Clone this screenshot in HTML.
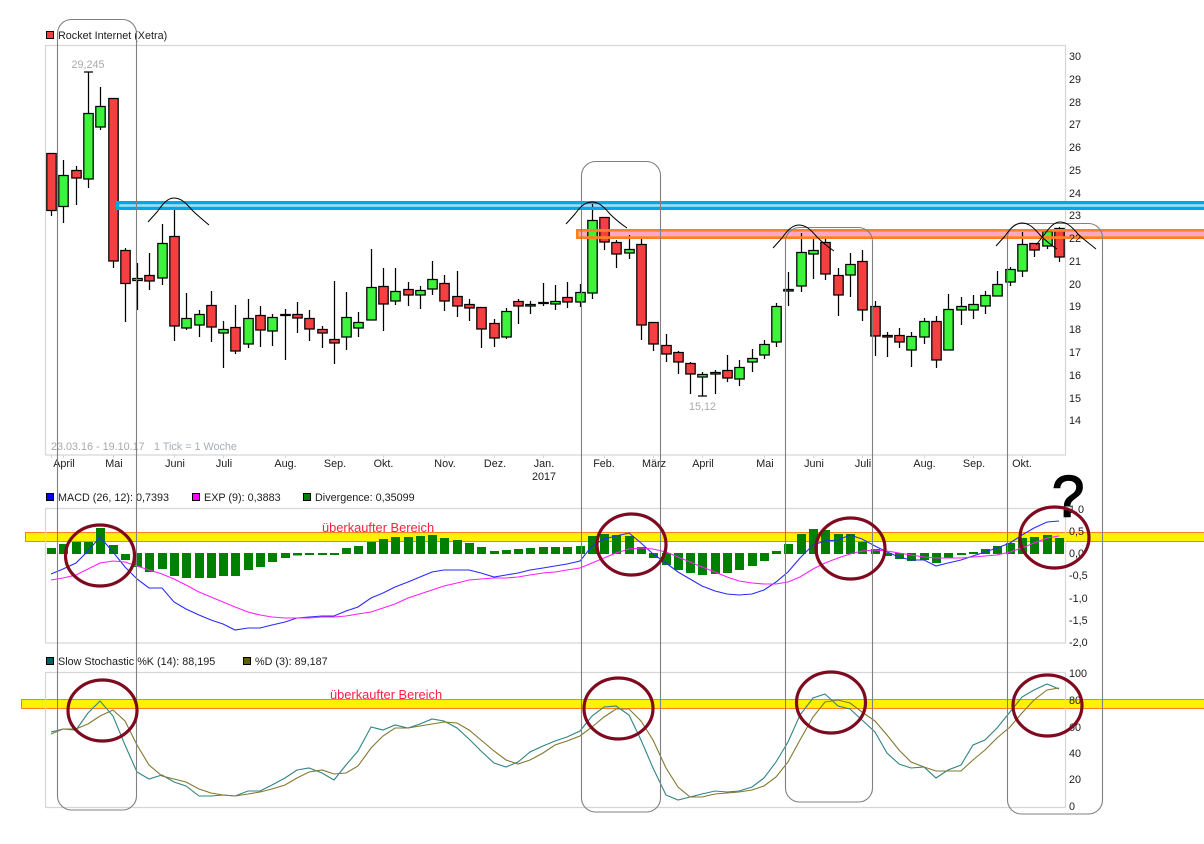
<!DOCTYPE html>
<html lang="de">
<head>
<meta charset="utf-8">
<title>Rocket Internet (Xetra)</title>
<style>
html,body{margin:0;padding:0;background:#fff;width:1204px;height:844px;overflow:hidden}
svg{display:block}
text{font-family:"Liberation Sans",sans-serif;font-size:10.8px;fill:#1c1c1c}
.m{text-anchor:middle}
.g{fill:#a9a9a9}
.o{font-size:12.85px;fill:#ff2040}
.arc{fill:none;stroke:#000;stroke-width:1}
.c{fill:none;stroke:#7f0a20;stroke-width:3.2}
.r{fill:none;stroke:#808080;stroke-width:1.1}
</style>
</head>
<body>
<svg width="1204" height="844" viewBox="0 0 1204 844" xmlns="http://www.w3.org/2000/svg">
<rect width="1204" height="844" fill="#fff"/>

<!-- yellow bands -->
<rect x="25.5" y="532.5" width="1190" height="9" fill="#fff200" stroke="#ff8020"/>
<rect x="21.5" y="699.5" width="1190" height="9" fill="#fff200" stroke="#ff8020"/>

<!-- panel frames -->
<g fill="none" stroke="#d6d6d6" stroke-width="1.2">
<path d="M45.5 455V45.5H1065.5V455H45.5"/>
<path d="M45.5 643V508.5H1065.5V643H45.5"/>
<path d="M45.5 807.5V672.5H1065.5V807.5H45.5"/>
</g>
<!-- axis ticks -->
<path fill="none" stroke="#d6d6d6" d="M51.5 455v3M63.5 455v3M113.5 455v3M174.5 455v3M223.5 455v3M285.5 455v3M334.5 455v3M383.5 455v3M444.5 455v3M494.5 455v3M543.5 455v3M604.5 455v3M653.5 455v3M702.5 455v3M764.5 455v3M813.5 455v3M862.5 455v3M924.5 455v3M973.5 455v3M1022.5 455v3"/>

<!-- band fills, behind the candles -->
<rect x="118" y="204" width="1100" height="3" fill="#a6dcf2"/>
<rect x="579" y="231.8" width="640" height="4.4" fill="#ffa8c0"/>

<!-- wicks -->
<path fill="none" stroke="#000" stroke-width="1.25" d="M51.5 153V216M63.5 160V223M76.5 166V205M88.5 72V188M84 72H93M100.5 87V130M113.5 98V268M125.5 248V322M137.5 263V310M149.5 253V290M162.5 224V285M174.5 210V341M186.5 293V330M199.5 310V337M211.5 291V342M223.5 321V368M235.5 305V354M248.5 299V348M260.5 306V347M272.5 314V346M285.5 309V360M297.5 302V333M309.5 310V341M322.5 326V348M334.5 281V364M346.5 292V350M358.5 312V337M371.5 249V320M383.5 268V331M395.5 268V305M408.5 282V306M420.5 286V309M432.5 261V295M444.5 275V311M457.5 271V317M469.5 299V321M481.5 307V348M494.5 319V347M506.5 308V339M518.5 299V324M530.5 301V314M543.5 283V306M555.5 285V310M567.5 282V308M580.5 284V307M592.5 204V299M604.5 217V250M616.5 240V268M629.5 235V259M641.5 238V340M653.5 322V351M666.5 334V362M678.5 351V374M690.5 362V394M702.5 372V396M698 396H707M715.5 370V394M727.5 355V382M739.5 360V386M752.5 349V372M764.5 340V359M776.5 303V347M788.5 272V306M801.5 233V292M813.5 238V279M825.5 239V280M838.5 268V316M850.5 253V297M862.5 250V321M875.5 301V356M887.5 332V357M899.5 328V348M911.5 332V367M924.5 318V344M936.5 316V368M948.5 294V350M961.5 297V325M973.5 295V319M985.5 291V314M997.5 271V296M1010.5 267V286M1022.5 232V277M1034.5 243V257M1047.5 229V249M1059.5 227V262"/>

<!-- red bodies -->
<path fill="#f44040" stroke="#000" stroke-width="1.25" d="M46.8 153.5h9.4V210.5h-9.4zM71.8 170.5h9.4V178h-9.4zM108.8 98.5h9.4V261h-9.4zM120.8 250.5h9.4V283.5h-9.4zM144.8 275.5h9.4V281h-9.4zM169.8 236.5h9.4V326h-9.4zM206.8 305.5h9.4V327h-9.4zM230.8 327.5h9.4V351h-9.4zM255.8 315.5h9.4V330h-9.4zM292.8 314.5h9.4V318h-9.4zM304.8 318.5h9.4V329h-9.4zM317.8 329.5h9.4V333h-9.4zM329.8 339.5h9.4V343h-9.4zM378.8 286.5h9.4V304h-9.4zM403.8 289.5h9.4V295h-9.4zM439.8 283.5h9.4V301h-9.4zM452.8 296.5h9.4V306h-9.4zM464.8 304.5h9.4V308h-9.4zM476.8 307.5h9.4V329h-9.4zM489.8 323.5h9.4V338h-9.4zM513.8 301.5h9.4V306h-9.4zM562.8 297.5h9.4V302h-9.4zM599.8 217.5h9.4V242h-9.4zM611.8 242.5h9.4V254h-9.4zM636.8 244.5h9.4V325h-9.4zM648.8 322.5h9.4V344h-9.4zM661.8 345.5h9.4V354h-9.4zM673.8 352.5h9.4V362h-9.4zM685.8 363.5h9.4V374h-9.4zM722.8 370.5h9.4V378h-9.4zM820.8 242.5h9.4V274h-9.4zM833.8 275.5h9.4V295h-9.4zM857.8 261.5h9.4V310h-9.4zM870.8 306.5h9.4V336h-9.4zM882.8 335.5h9.4V337h-9.4zM894.8 335.5h9.4V342h-9.4zM931.8 321.5h9.4V360h-9.4zM1029.8 243.5h9.4V250h-9.4zM1054.8 228.5h9.4V257h-9.4z"/>

<!-- green bodies -->
<path fill="#3cf43c" stroke="#000" stroke-width="1.25" d="M58.8 175.5h9.4V206.5h-9.4zM83.8 113.5h9.4V179h-9.4zM95.8 106.5h9.4V127h-9.4zM132.8 278.5h9.4V280.5h-9.4zM157.8 243.5h9.4V278h-9.4zM181.8 318.5h9.4V328h-9.4zM194.8 314.5h9.4V325h-9.4zM218.8 329.5h9.4V333h-9.4zM243.8 318.5h9.4V344h-9.4zM267.8 317.5h9.4V331h-9.4zM280.8 314.5h9.4V315.5h-9.4zM341.8 317.5h9.4V337h-9.4zM353.8 322.5h9.4V328h-9.4zM366.8 287.5h9.4V320h-9.4zM390.8 291.5h9.4V301h-9.4zM415.8 290.5h9.4V295h-9.4zM427.8 279.5h9.4V289h-9.4zM501.8 311.5h9.4V337h-9.4zM525.8 304.5h9.4V306h-9.4zM538.8 302.5h9.4V303.5h-9.4zM550.8 301.5h9.4V304h-9.4zM575.8 292.5h9.4V302h-9.4zM587.8 220.5h9.4V293h-9.4zM624.8 249.5h9.4V253h-9.4zM697.8 374.5h9.4V377h-9.4zM710.8 372.5h9.4V374h-9.4zM734.8 367.5h9.4V379h-9.4zM747.8 358.5h9.4V362h-9.4zM759.8 344.5h9.4V355h-9.4zM771.8 306.5h9.4V342h-9.4zM783.8 289.5h9.4V291h-9.4zM796.8 252.5h9.4V286h-9.4zM808.8 250.5h9.4V254h-9.4zM845.8 264.5h9.4V275h-9.4zM906.8 336.5h9.4V350h-9.4zM919.8 321.5h9.4V337h-9.4zM943.8 309.5h9.4V350h-9.4zM956.8 306.5h9.4V310h-9.4zM968.8 304.5h9.4V310h-9.4zM980.8 295.5h9.4V306h-9.4zM992.8 284.5h9.4V296h-9.4zM1005.8 269.5h9.4V282h-9.4zM1017.8 244.5h9.4V271h-9.4zM1042.8 231.5h9.4V246h-9.4z"/>

<!-- band borders, over the candles -->
<rect x="117.6" y="202.6" width="1100" height="5.8" fill="none" stroke="#00a6ec" stroke-width="3.2"/>
<rect x="577.4" y="230.4" width="640" height="7.2" fill="none" stroke="#ff7f27" stroke-width="2.8"/>

<!-- MACD histogram -->
<path fill="none" stroke="#008000" stroke-width="9" d="M51.5 548V554M63.5 544V554M76.5 542V554M88.5 542V554M100.5 528V554M113.5 545V554M125.5 554V560M137.5 553V567M149.5 553V572M162.5 553V569M174.5 553V576M186.5 553V578M199.5 553V578M211.5 553V578M223.5 553V576M235.5 553V576M248.5 553V570M260.5 553V567M272.5 553V562M285.5 553V558M297.5 553V555.5M309.5 553V555M322.5 553V555M334.5 553V555M346.5 548V554M358.5 546V554M371.5 542V554M383.5 539V554M395.5 537V554M408.5 537V554M420.5 536V554M432.5 535V554M444.5 538V554M457.5 540V554M469.5 543V554M481.5 547V554M494.5 551V554M506.5 550V554M518.5 549V554M530.5 548V554M543.5 547V554M555.5 547V554M567.5 547V554M580.5 546V554M592.5 536V554M604.5 534V554M616.5 535V554M629.5 536V554M641.5 547V554M653.5 553V558M666.5 553V565M678.5 553V570M690.5 553V573M702.5 553V575M715.5 553V574M727.5 553V573M739.5 553V570M752.5 553V566M764.5 553V561M776.5 551V554M788.5 544V554M801.5 534V554M813.5 529V554M825.5 530V554M838.5 534V554M850.5 534V554M862.5 542V554M875.5 549V554M887.5 553V556M899.5 553V559M911.5 553V561M924.5 553V560M936.5 553V563M948.5 553V558M961.5 553V555M973.5 552V554M985.5 549V554M997.5 546V554M1010.5 543V554M1022.5 538V554M1034.5 537V554M1047.5 535V554M1059.5 538V554"/>

<!-- MACD lines -->
<polyline fill="none" stroke="#2a2aff" stroke-width="1.1" points="51,574 63,569 76,563 88,551 100,537 113,552 125,567 137,579 149,588 162,588 174,602 186,609 199,615 211,620 223,624 235,630 248,628 260,628 272,625 285,622 297,618 309,617 322,616 334,616 346,611 358,607 371,598 383,593 395,587 408,582 420,577 432,572 444,570 457,570 469,570 481,573 494,577 506,575 518,573 530,570 543,568 555,566 567,564 580,561 592,546 604,539 616,536 629,533 641,543 653,554 666,563 678,572 690,579 702,586 715,591 727,594 739,595 752,594 764,590 776,582 788,572 800,558 813,545 825,541 838,540 850,535 862,539 875,546 887,552 899,557 911,560 924,560 936,566 948,563 961,560 973,556 985,552 997,548 1010,543 1022,535 1034,528 1047,522 1059,521"/>
<polyline fill="none" stroke="#ff20ff" stroke-width="1.1" points="51,580 63,578 76,575 88,569 100,563 113,561 125,562 137,566 149,570 162,574 174,579 186,585 199,592 211,597 223,602 235,607 248,612 260,615 272,617 285,618 297,618 309,618 322,617 334,617 346,616 358,614 371,612 383,608 395,604 408,598 420,594 432,590 444,586 457,583 469,580 481,579 494,578 506,578 518,577 530,575 543,573 555,572 567,570 580,568 592,563 604,558 616,553 629,549 641,548 653,549 666,552 678,557 690,562 702,567 715,572 727,577 739,581 752,583 764,584 776,584 788,582 800,577 813,569 825,563 838,558 850,554 862,551 875,550 887,551 899,553 911,555 924,557 936,558 948,558 961,558 973,557 985,556 997,555 1010,552 1022,548 1034,543 1047,538 1059,536"/>

<!-- Stochastic lines -->
<polyline fill="none" stroke="#308484" stroke-width="1.1" points="51,732 63,729 76,730 88,713 100,701 113,716 125,745 137,772 149,779 162,775 174,782 186,786 199,796 211,796 223,795 235,796 248,791 260,791 272,785 285,778 297,770 309,768 322,773 334,780 346,765 358,751 371,727 383,730 395,725 408,728 420,724 432,719 444,721 457,728 469,739 481,751 494,763 506,767 518,762 530,752 543,746 555,741 567,737 580,731 592,716 604,707 616,706 629,715 641,740 653,768 666,795 678,800 690,797 702,794 715,791 727,792 739,791 752,787 764,778 776,762 788,742 800,715 813,698 825,694 838,706 850,709 862,720 875,732 887,753 899,764 911,768 924,767 936,778 948,770 961,765 973,745 985,740 997,728 1010,712 1022,697 1034,690 1047,684 1059,689"/>
<polyline fill="none" stroke="#807830" stroke-width="1.1" points="51,734 63,729 76,729 88,724 100,716 113,710 125,721 137,745 149,765 162,776 174,779 186,782 199,789 211,793 223,795 235,796 248,794 260,792 272,789 285,785 297,778 309,772 322,770 334,774 346,773 358,766 371,748 383,736 395,728 408,728 420,726 432,724 444,722 457,723 469,730 481,740 494,751 506,760 518,764 530,760 543,753 555,745 567,741 580,736 592,727 604,717 616,709 629,709 641,721 653,740 666,768 678,787 690,797 702,797 715,794 727,793 739,792 752,790 764,786 776,777 788,762 800,740 813,717 825,702 838,700 850,703 862,712 875,721 887,735 899,750 911,762 924,767 936,771 948,771 961,771 973,760 985,750 997,738 1010,727 1022,713 1034,700 1047,690 1059,688"/>

<!-- legends -->
<rect x="46.5" y="31.5" width="7" height="7" fill="#f44040" stroke="#000"/>
<text x="58" y="39">Rocket Internet (Xetra)</text>
<rect x="46.5" y="493.5" width="7" height="7" fill="#0000ff" stroke="#000"/>
<text x="58" y="501">MACD (26, 12): 0,7393</text>
<rect x="192.5" y="493.5" width="7" height="7" fill="#ff00ff" stroke="#000"/>
<text x="204" y="501">EXP (9): 0,3883</text>
<rect x="303.5" y="493.5" width="7" height="7" fill="#008000" stroke="#000"/>
<text x="315" y="501">Divergence: 0,35099</text>
<rect x="46.5" y="657.5" width="7" height="7" fill="#006060" stroke="#000"/>
<text x="58" y="665">Slow Stochastic %K (14): 88,195</text>
<rect x="243.5" y="657.5" width="7" height="7" fill="#606000" stroke="#000"/>
<text x="255" y="665">%D (3): 89,187</text>

<!-- price annotations -->
<text class="g m" x="88" y="68">29,245</text>
<text class="g m" x="702.5" y="410">15,12</text>
<text class="g" x="51" y="450" style="fill:#a6a9ad">23.03.16 - 19.10.17</text>
<text class="g" x="154" y="450" style="fill:#a6adb8">1 Tick = 1 Woche</text>

<!-- y axis main -->
<g>
<text x="1069" y="60">30</text><text x="1069" y="83">29</text><text x="1069" y="106">28</text><text x="1069" y="128">27</text><text x="1069" y="151">26</text><text x="1069" y="174">25</text><text x="1069" y="197">24</text><text x="1069" y="219">23</text><text x="1069" y="242">22</text><text x="1069" y="265">21</text><text x="1069" y="288">20</text><text x="1069" y="310">19</text><text x="1069" y="333">18</text><text x="1069" y="356">17</text><text x="1069" y="379">16</text><text x="1069" y="402">15</text><text x="1069" y="424">14</text>
</g>
<!-- y axis MACD -->
<g>
<text x="1069" y="535">0,5</text><text x="1069" y="557">0,0</text><text x="1069" y="579">-0,5</text><text x="1069" y="602">-1,0</text><text x="1069" y="624">-1,5</text><text x="1069" y="646">-2,0</text>
</g>
<!-- y axis Stochastic -->
<g>
<text x="1069" y="677">100</text><text x="1069" y="704">80</text><text x="1069" y="731">60</text><text x="1069" y="757">40</text><text x="1069" y="783">20</text><text x="1069" y="810">0</text>
</g>

<!-- months -->
<g>
<text class="m" x="64" y="467">April</text><text class="m" x="114" y="467">Mai</text><text class="m" x="175" y="467">Juni</text><text class="m" x="224" y="467">Juli</text><text class="m" x="285.5" y="467">Aug.</text><text class="m" x="335" y="467">Sep.</text><text class="m" x="383.5" y="467">Okt.</text><text class="m" x="445" y="467">Nov.</text><text class="m" x="495" y="467">Dez.</text><text class="m" x="544" y="467">Jan.</text><text class="m" x="544" y="480">2017</text><text class="m" x="604" y="467">Feb.</text><text class="m" x="654" y="467">März</text><text class="m" x="703" y="467">April</text><text class="m" x="765" y="467">Mai</text><text class="m" x="814" y="467">Juni</text><text class="m" x="863" y="467">Juli</text><text class="m" x="924.5" y="467">Aug.</text><text class="m" x="974" y="467">Sep.</text><text class="m" x="1022" y="467">Okt.</text>
</g>

<!-- overbought labels -->
<text class="o" x="322" y="532">überkaufter Bereich</text>
<text class="o" x="330" y="699">überkaufter Bereich</text>

<!-- rounded boxes -->
<rect class="r" x="57.5" y="19.5" width="79" height="790.5" rx="14"/>
<rect class="r" x="581.5" y="161.5" width="79" height="650.5" rx="14"/>
<rect class="r" x="785.5" y="227.5" width="87" height="574.5" rx="14"/>
<rect class="r" x="1007.5" y="223.5" width="95" height="590.5" rx="14"/>

<!-- arcs -->
<path class="arc" d="M148 222L157 212C162 205 167 198 174 198C181 198 186 203 192 210C197 215 203 220 209 225"/>
<path class="arc" d="M566 224L575 214C580 207 585 202 592 202C599 202 604 207 610 214C615 219 621 224 627 228"/>
<path class="arc" d="M773 248L782 238C787 231 792 225 799 225C806 225 811 230 817 237C822 242 828 247 834 251"/>
<path class="arc" d="M996 246L1005 236C1010 229 1015 223 1022 223C1029 223 1034 228 1040 235C1045 240 1051 245 1057 249"/>
<path class="arc" d="M1036 245L1044 235C1049 228 1054 222 1060 222C1067 222 1072 227 1078 234C1083 239 1090 244 1096 249"/>

<!-- question mark -->
<text x="1052" y="516.5" style="font-size:58px;fill:#000;stroke:#000;stroke-width:1.6">?</text>
<text x="1069" y="513">1,0</text>

<!-- circles -->
<ellipse class="c" cx="100" cy="555.5" rx="34.5" ry="30.5"/>
<ellipse class="c" cx="631.5" cy="544.5" rx="34.5" ry="30.5"/>
<ellipse class="c" cx="850.5" cy="548.5" rx="34.5" ry="30.5"/>
<ellipse class="c" cx="1054.5" cy="537.5" rx="34.5" ry="30.5"/>
<ellipse class="c" cx="102.5" cy="710.5" rx="34.5" ry="30.5"/>
<ellipse class="c" cx="618.5" cy="708.5" rx="34.5" ry="30.5"/>
<ellipse class="c" cx="831" cy="702.5" rx="34.5" ry="30.5"/>
<ellipse class="c" cx="1047.5" cy="705.5" rx="34.5" ry="30.5"/>
</svg>
</body>
</html>
